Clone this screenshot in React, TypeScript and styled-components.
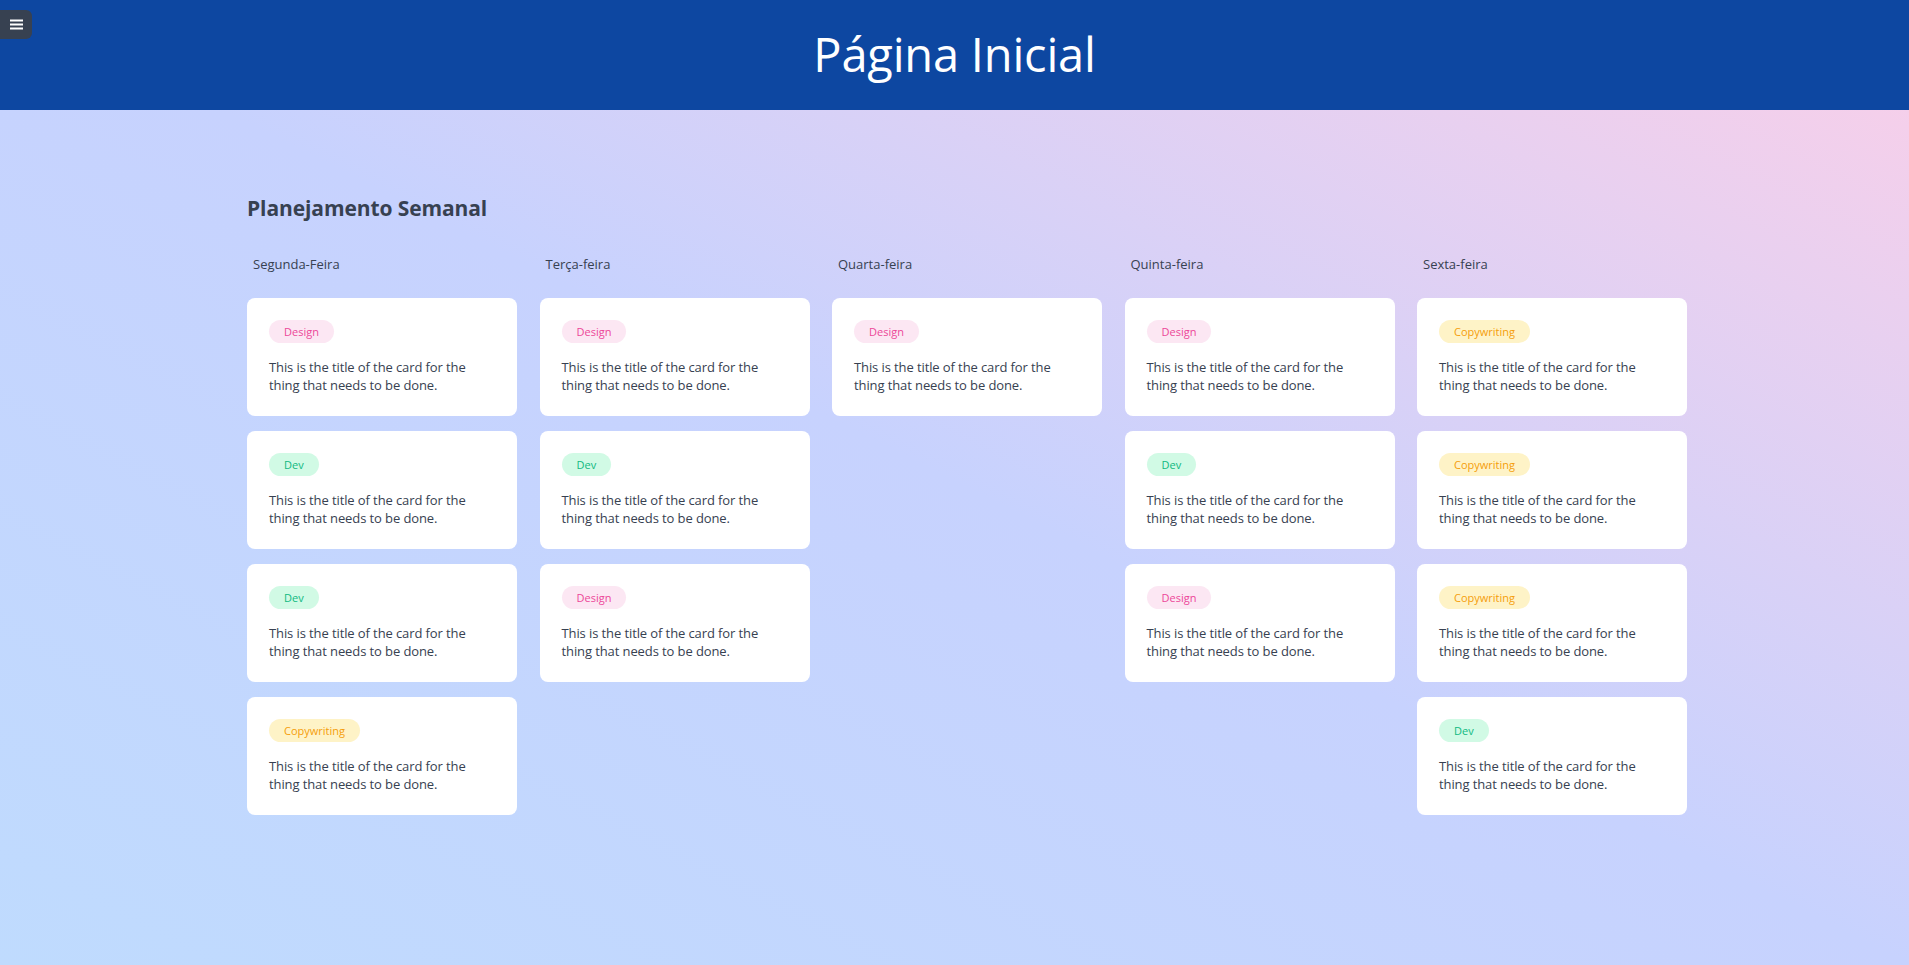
import React from "react";
import styled, { createGlobalStyle } from "styled-components";

const GlobalStyle = createGlobalStyle`
  html, body {
    margin: 0;
    padding: 0;
    min-height: 100%;
  }
  body {
    font-family: "Open Sans", "Noto Sans", "Liberation Sans", sans-serif;
    background: linear-gradient(to top right, #bfdbfe 0%, #c7d2fe 50%, #fbcfe8 100%);
    background-attachment: fixed;
    min-height: 965px;
  }
  * { box-sizing: border-box; }
`;

const Page = styled.div`
  position: relative;
  min-height: 965px;
`;

const Header = styled.header`
  height: 110px;
  background: #0d47a1;
  display: flex;
  align-items: center;
  justify-content: center;
`;

const Title = styled.h1`
  margin: 0 0 2px 0;
  color: #ffffff;
  font-size: 47px;
  font-weight: 400;
  letter-spacing: -0.2px;
`;

const MenuButton = styled.button`
  position: absolute;
  top: 10px;
  left: 0;
  width: 32px;
  height: 29px;
  border: none;
  border-radius: 0 6px 6px 0;
  background: #374151;
  display: flex;
  align-items: center;
  justify-content: center;
  padding: 0;
  cursor: pointer;
`;

const Main = styled.main`
  padding: 83px 0 0 247px;
`;

const Heading = styled.h2`
  margin: 0 0 31px 0;
  font-size: 21px;
  line-height: 30px;
  font-weight: 700;
  color: #374151;
  letter-spacing: -0.1px;
`;

const Board = styled.div`
  display: grid;
  grid-template-columns: repeat(5, 270px);
  column-gap: 22.5px;
  align-items: start;
`;

const Column = styled.section`
  display: flex;
  flex-direction: column;
  gap: 15px;
`;

const DayLabel = styled.h3`
  margin: 0 0 9px 0;
  padding-left: 6px;
  font-size: 13px;
  line-height: 20px;
  font-weight: 400;
  color: #374151;
`;

const Card = styled.article`
  background: #ffffff;
  border-radius: 8px;
  padding: 22px;
  height: 118px;
  display: flex;
  flex-direction: column;
  align-items: flex-start;
`;

type TagKind = "Design" | "Dev" | "Copywriting";

const tagColors: Record<TagKind, { bg: string; fg: string }> = {
  Design: { bg: "#fce7f3", fg: "#ec4899" },
  Dev: { bg: "#d1fae5", fg: "#10b981" },
  Copywriting: { bg: "#fef3c7", fg: "#f59e0b" },
};

const Tag = styled.span<{ $kind: TagKind }>`
  display: inline-flex;
  align-items: center;
  height: 23px;
  padding: 0 15px;
  border-radius: 999px;
  font-size: 11px;
  background: ${(p) => tagColors[p.$kind].bg};
  color: ${(p) => tagColors[p.$kind].fg};
`;

const CardText = styled.p`
  margin: 15px 0 0 0;
  font-size: 13px;
  line-height: 18px;
  color: #374151;
  letter-spacing: -0.1px;
`;

const TEXT = "This is the title of the card for the thing that needs to be done.";

const days: { name: string; tags: TagKind[] }[] = [
  { name: "Segunda-Feira", tags: ["Design", "Dev", "Dev", "Copywriting"] },
  { name: "Terça-feira", tags: ["Design", "Dev", "Design"] },
  { name: "Quarta-feira", tags: ["Design"] },
  { name: "Quinta-feira", tags: ["Design", "Dev", "Design"] },
  { name: "Sexta-feira", tags: ["Copywriting", "Copywriting", "Copywriting", "Dev"] },
];

export default function App() {
  return (
    <Page>
      <GlobalStyle />
      <Header>
        <Title>Página Inicial</Title>
      </Header>
      <MenuButton aria-label="menu">
        <svg width="13" height="11" viewBox="0 0 13 11">
          <rect x="0" y="0.5" width="13" height="2" fill="#fff" />
          <rect x="0" y="4.5" width="13" height="2" fill="#fff" />
          <rect x="0" y="8.5" width="13" height="2" fill="#fff" />
        </svg>
      </MenuButton>
      <Main>
        <Heading>Planejamento Semanal</Heading>
        <Board>
          {days.map((d) => (
            <Column key={d.name}>
              <DayLabel>{d.name}</DayLabel>
              {d.tags.map((t, i) => (
                <Card key={i}>
                  <Tag $kind={t}>{t}</Tag>
                  <CardText>{TEXT}</CardText>
                </Card>
              ))}
            </Column>
          ))}
        </Board>
      </Main>
    </Page>
  );
}
